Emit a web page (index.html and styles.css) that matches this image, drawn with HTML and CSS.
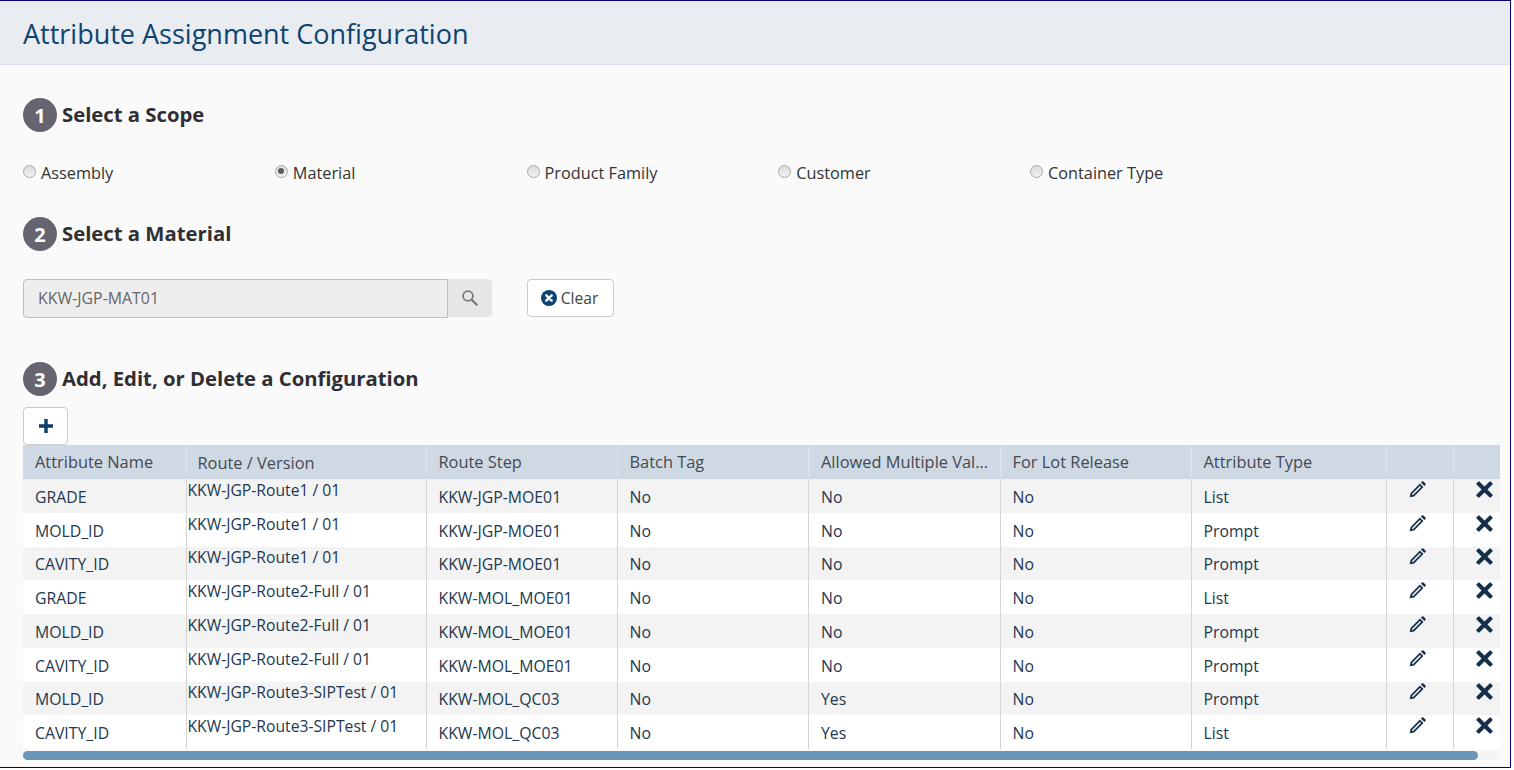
FILE: index.html
```html
<!DOCTYPE html>
<html lang="en">
<head>
<meta charset="utf-8">
<title>Attribute Assignment Configuration</title>
<link rel="stylesheet" href="styles.css">
</head>
<body>
<svg class="defs" width="0" height="0" aria-hidden="true">
  <symbol id="pencil" viewBox="0 0 16 16"><path fill="currentColor" fill-rule="evenodd" d="M11.200 1.500 12.200.5a1 1 0 0 1 1.400 0l1.900 1.900a1 1 0 0 1 0 1.400l-1 1zM10.300 2.400l3.300 3.300-8.800 8.800-4.200.9.900-4.200zM10.300 4.700 3.100 11.900l-.3 1.300 1.300-.3 7.200-7.200z"/></symbol>
  <symbol id="cross" viewBox="0 0 16 16"><path fill="currentColor" d="M3.400.6 8 5.200 12.600.6a1 1 0 0 1 1.400 0l1.400 1.400a1 1 0 0 1 0 1.400L10.800 8l4.600 4.600a1 1 0 0 1 0 1.400L14 15.400a1 1 0 0 1-1.400 0L8 10.800l-4.600 4.600a1 1 0 0 1-1.400 0L.6 14a1 1 0 0 1 0-1.400L5.200 8 .6 3.400A1 1 0 0 1 .6 2L2 .6a1 1 0 0 1 1.400 0z"/></symbol>
</svg>
<div class="frame">
  <header class="page-header"><h1>Attribute Assignment Configuration</h1></header>
  <main class="content">
    <h2 class="step step-1"><span class="num">1</span><span class="step-label">Select a Scope</span></h2>
    <div class="scopes">
      <label class="scope"><span class="radio"></span>Assembly</label>
      <label class="scope"><span class="radio on"></span>Material</label>
      <label class="scope"><span class="radio"></span>Product Family</label>
      <label class="scope"><span class="radio"></span>Customer</label>
      <label class="scope"><span class="radio"></span>Container Type</label>
    </div>
    <h2 class="step step-2"><span class="num">2</span><span class="step-label">Select a Material</span></h2>
    <div class="picker">
      <div class="lookup">
        <div class="lookup-input">KKW-JGP-MAT01</div>
        <div class="lookup-btn"><svg width="18" height="18" viewBox="0 0 18 18"><circle cx="7" cy="7" r="4.900" fill="none" stroke="currentColor" stroke-width="1.700"/><path d="M10.700 10.700l5 5" fill="none" stroke="currentColor" stroke-width="2.200" stroke-linecap="round"/></svg></div>
      </div>
      <button class="btn clear"><svg width="16" height="16" viewBox="0 0 16 16"><circle cx="8" cy="8" r="8" fill="#0b4274"/><path d="M5.300 5.300l5.400 5.400M10.700 5.300l-5.400 5.400" stroke="#fff" stroke-width="2.400" stroke-linecap="round"/></svg>Clear</button>
    </div>
    <h2 class="step step-3"><span class="num">3</span><span class="step-label">Add, Edit, or Delete a Configuration</span></h2>
    <button class="btn add"><svg width="16" height="16" viewBox="0 0 16 16"><path d="M8 1v14M1 8h14" stroke="#0b3d6e" stroke-width="3.400"/></svg></button>
    <table class="grid">
      <colgroup><col class="c1"><col class="c2"><col class="c3"><col class="c4"><col class="c5"><col class="c6"><col class="c7"><col class="c8"><col class="c9"></colgroup>
      <thead><tr><th>Attribute Name</th><th class="route-h">Route / Version</th><th>Route Step</th><th>Batch Tag</th><th>Allowed Multiple Val...</th><th>For Lot Release</th><th>Attribute Type</th><th></th><th></th></tr></thead>
      <tbody>
        <tr><td>GRADE</td><td class="route">KKW-JGP-Route1 / 01</td><td>KKW-JGP-MOE01</td><td>No</td><td>No</td><td>No</td><td>List</td><td class="ico"><svg class="pen"><use href="#pencil"/></svg></td><td class="ico"><svg class="del"><use href="#cross"/></svg></td></tr>
        <tr><td>MOLD_ID</td><td class="route">KKW-JGP-Route1 / 01</td><td>KKW-JGP-MOE01</td><td>No</td><td>No</td><td>No</td><td>Prompt</td><td class="ico"><svg class="pen"><use href="#pencil"/></svg></td><td class="ico"><svg class="del"><use href="#cross"/></svg></td></tr>
        <tr><td>CAVITY_ID</td><td class="route">KKW-JGP-Route1 / 01</td><td>KKW-JGP-MOE01</td><td>No</td><td>No</td><td>No</td><td>Prompt</td><td class="ico"><svg class="pen"><use href="#pencil"/></svg></td><td class="ico"><svg class="del"><use href="#cross"/></svg></td></tr>
        <tr><td>GRADE</td><td class="route">KKW-JGP-Route2-Full / 01</td><td>KKW-MOL_MOE01</td><td>No</td><td>No</td><td>No</td><td>List</td><td class="ico"><svg class="pen"><use href="#pencil"/></svg></td><td class="ico"><svg class="del"><use href="#cross"/></svg></td></tr>
        <tr><td>MOLD_ID</td><td class="route">KKW-JGP-Route2-Full / 01</td><td>KKW-MOL_MOE01</td><td>No</td><td>No</td><td>No</td><td>Prompt</td><td class="ico"><svg class="pen"><use href="#pencil"/></svg></td><td class="ico"><svg class="del"><use href="#cross"/></svg></td></tr>
        <tr><td>CAVITY_ID</td><td class="route">KKW-JGP-Route2-Full / 01</td><td>KKW-MOL_MOE01</td><td>No</td><td>No</td><td>No</td><td>Prompt</td><td class="ico"><svg class="pen"><use href="#pencil"/></svg></td><td class="ico"><svg class="del"><use href="#cross"/></svg></td></tr>
        <tr><td>MOLD_ID</td><td class="route">KKW-JGP-Route3-SIPTest / 01</td><td>KKW-MOL_QC03</td><td>No</td><td>Yes</td><td>No</td><td>Prompt</td><td class="ico"><svg class="pen"><use href="#pencil"/></svg></td><td class="ico"><svg class="del"><use href="#cross"/></svg></td></tr>
        <tr><td>CAVITY_ID</td><td class="route">KKW-JGP-Route3-SIPTest / 01</td><td>KKW-MOL_QC03</td><td>No</td><td>Yes</td><td>No</td><td>List</td><td class="ico"><svg class="pen"><use href="#pencil"/></svg></td><td class="ico"><svg class="del"><use href="#cross"/></svg></td></tr>
      </tbody>
    </table>
    <div class="scrollbar"><div class="thumb"></div></div>
  </main>
</div>
</body>
</html>
```
FILE: styles.css
```css
* { box-sizing: border-box; }
html, body { margin: 0; height: 100%; background: #fff; overflow: hidden; }
body { font-family: "Open Sans", sans-serif; color: #333; font-size: 15px; }
.defs { position: absolute; }
.frame {
  width: 1511px; height: 768px;
  border: 1px solid #00007f; border-width: 1px 1px 1px 0;
  background: #fafafa;
  overflow: hidden;
}
.page-header {
  height: 64px;
  background: #e9ecf1;
  border-bottom: 1px solid #dde2ea;
  padding-left: 23px;
}
.page-header h1 {
  margin: 0;
  font-size: 27px; font-weight: 400; line-height: 65px;
  color: #0e4470;
}
.content { padding: 0 10px 0 23px; }
.step {
  display: flex; align-items: center; gap: 5px;
  margin: 0; height: 34px;
  font-size: 20.300px; font-weight: 700; color: #2f2f33;
}
.step-label { margin-bottom: 2px; }
.step-1 { margin-top: 33px; }
.step-2 { margin-top: 32px; }
.step-3 { margin-top: 44px; }
.num {
  width: 34px; height: 34px; border-radius: 50%;
  background: #66656f; color: #fff;
  display: flex; align-items: center; justify-content: center;
  font-size: 20px; font-weight: 700;
}
.scopes { display: flex; margin-top: 29px; height: 24px; align-items: center; }
.scope { width: 251.750px; display: flex; align-items: center; gap: 5px; font-weight: 500; color: #333; font-size: 16.300px; }
.radio {
  width: 13px; height: 13px; border-radius: 50%;
  border: 1px solid #a9a9a9;
  background: linear-gradient(#dcdcdc, #f2f2f2);
  position: relative; top: -2px;
}
.radio.on::after {
  content: ""; position: absolute; left: 2.500px; top: 2.500px;
  width: 6px; height: 6px; border-radius: 50%; background: #5d5d5d;
}
.picker { display: flex; margin-top: 28px; gap: 35px; height: 39px; }
.lookup { display: flex; width: 469px; }
.lookup-input {
  width: 425px; height: 39px; padding-left: 14px;
  background: #eee; border: 1px solid #bdbdbd; border-radius: 4px 0 0 4px;
  font-size: 15.900px; line-height: 37px; color: #666;
}
.lookup-btn {
  width: 44px; height: 38px; background: #e6e6e6; border-radius: 0 4px 4px 0;
  display: flex; align-items: center; justify-content: center; color: #777;
}
.btn {
  background: #fff; border: 1px solid #ccc; border-radius: 4px;
  font-family: inherit; font-size: 15.600px; color: #444; padding: 0;
  display: flex; align-items: center; justify-content: center;
}
.clear { width: 87px; height: 38px; gap: 4px; padding-right: 2px; }
.add { width: 45px; height: 38px; margin-top: 11px; }
.grid {
  table-layout: fixed; border-collapse: collapse; width: 1477px;
  font-size: 15.800px;
}
.c1 { width: 163px; } .c2 { width: 240px; } .c3 { width: 191px; } .c4 { width: 191px; }
.c5 { width: 192px; } .c6 { width: 191px; } .c7 { width: 195px; } .c8 { width: 67px; } .c9 { width: 47px; }
.grid th {
  height: 34px; background: #cfd9e3; color: #444a52;
  font-weight: 500; font-size: 16.400px; line-height: 22px; text-align: left; padding: 0 12px;
  border-left: 1px solid #dfe5ec; white-space: nowrap; overflow: hidden;
}
.grid th:first-child, .grid td:first-child { border-left: 0; }
.grid .route-h { padding-top: 2px; padding-bottom: 1px; padding-left: 11px; }
.grid tbody tr { height: 33.750px; }
.grid tbody tr:nth-child(odd) td { background: #f3f3f3; }
.grid tbody tr:nth-child(even) td { background: #fff; }
.grid td {
  padding: 2px 12px 0; border-left: 1px solid #d4d4d4; line-height: 20px;
  color: #22384f; white-space: nowrap; overflow: hidden;
}
.grid th:nth-child(5), .grid td:nth-child(5) { padding-left: 12.500px; }
.grid .route { padding: 0 0 12px 1px; font-size: 15.700px; }
.grid .ico { padding: 0 0 13px 0; text-align: center; line-height: 0; }
.pen { width: 17px; height: 17px; color: #17324d; margin-right: 5px; }
.del { width: 17px; height: 17px; color: #14304c; margin-left: 16px; }
.scrollbar { height: 9px; margin-top: 2px; width: 1477px; background: #f5f5f5; border-radius: 5px; }
.thumb { width: 1455px; height: 9px; background: #6b96b8; border-radius: 5px; }
```
